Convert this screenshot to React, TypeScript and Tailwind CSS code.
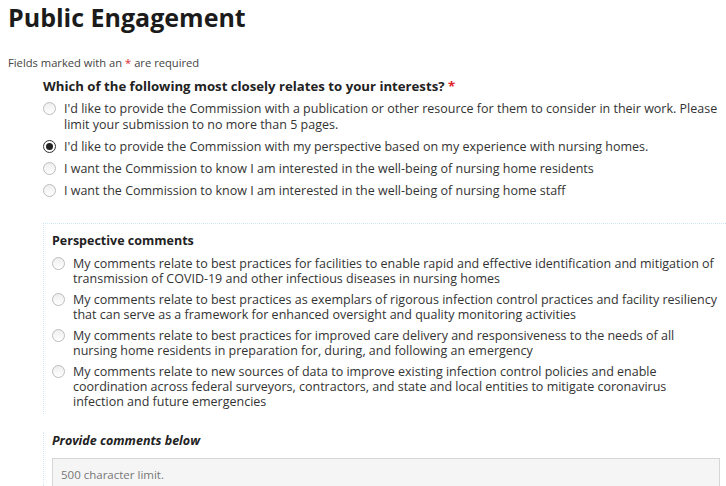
import { useState } from 'react';

const interestOptions = [
    "I'd like to provide the Commission with a publication or other resource for them to consider in their work. Please limit your submission to no more than 5 pages.",
    "I'd like to provide the Commission with my perspective based on my experience with nursing homes.",
    'I want the Commission to know I am interested in the well-being of nursing home residents',
    'I want the Commission to know I am interested in the well-being of nursing home staff',
];

const perspectiveOptions = [
    'My comments relate to best practices for facilities to enable rapid and effective identification and mitigation of transmission of COVID-19 and other infectious diseases in nursing homes',
    'My comments relate to best practices as exemplars of rigorous infection control practices and facility resiliency that can serve as a framework for enhanced oversight and quality monitoring activities',
    'My comments relate to best practices for improved care delivery and responsiveness to the needs of all nursing home residents in preparation for, during, and following an emergency',
    'My comments relate to new sources of data to improve existing infection control policies and enable coordination across federal surveyors, contractors, and state and local entities to mitigate coronavirus infection and future emergencies',
];

// Radio circle drawn to match the old-style browser radio
const Radio = ({ checked }: { checked: boolean }) => (
    <span
        className={`mt-[1px] flex h-[13px] w-[13px] shrink-0 items-center justify-center rounded-full border ${
            checked ? 'border-[#333] bg-white' : 'border-[#bcbcbc] bg-gradient-to-b from-[#eeeeee] to-white'
        }`}
    >
        {checked && <span className="h-[7px] w-[7px] rounded-full bg-[#222]" />}
    </span>
);

export default function App() {
    const [interest, setInterest] = useState(1);
    const [perspective, setPerspective] = useState<number | null>(null);

    return (
        <div className="min-h-screen bg-white pl-2 text-[#333] font-['Open_Sans',sans-serif]">
            <h1 className="pt-[1px] text-[25px] font-bold leading-[32px] text-[#1b1b1b]">Public Engagement</h1>

            <p className="mt-[22px] text-[11.2px] leading-[16px] text-[#444]">
                Fields marked with an <span className="text-[#e0242a]">*</span> are required
            </p>

            <div className="ml-[35px]">
                <div className="mt-[6px] text-[13.2px] font-bold leading-[18px] text-[#222]">
                    Which of the following most closely relates to your interests? <span className="text-[#e0242a]">*</span>
                </div>

                <div className="mt-[6px] flex flex-col gap-[6px]">
                    {interestOptions.map((opt, i) => (
                        <label key={i} onClick={() => setInterest(i)} className="flex cursor-pointer items-start gap-[8px]">
                            <Radio checked={interest === i} />
                            <span className="text-[12.5px] leading-[16px]">{opt}</span>
                        </label>
                    ))}
                </div>

                {/* Perspective panel */}
                <div className="mt-[24px] border-l border-t border-dotted border-[#cde8f4] pb-[5px] pl-[8px] pt-[8px]">
                    <div className="text-[12.5px] font-bold leading-[18px] text-[#222]">Perspective comments</div>
                    <div className="mt-[6px] flex flex-col gap-[6px] pr-[9px]">
                        {perspectiveOptions.map((opt, i) => (
                            <label key={i} onClick={() => setPerspective(i)} className="flex cursor-pointer items-start gap-[8px]">
                                <Radio checked={perspective === i} />
                                <span className="text-[12.5px] leading-[15px]">{opt}</span>
                            </label>
                        ))}
                    </div>
                </div>

                {/* Comments panel */}
                <div className="mt-[18px] border-l border-dotted border-[#cde8f4] pl-[8px] pr-[6px]">
                    <div className="text-[12.5px] font-bold italic leading-[18px] text-[#222]">Provide comments below</div>
                    <textarea
                        placeholder="500 character limit."
                        className="mt-[8px] block h-[60px] w-full resize-none border border-[#d6d6d6] bg-[#f5f5f5] px-[8px] py-[7px] text-[11.5px] text-[#333] placeholder:text-[#777] outline-none"
                    />
                </div>
            </div>
        </div>
    );
}
